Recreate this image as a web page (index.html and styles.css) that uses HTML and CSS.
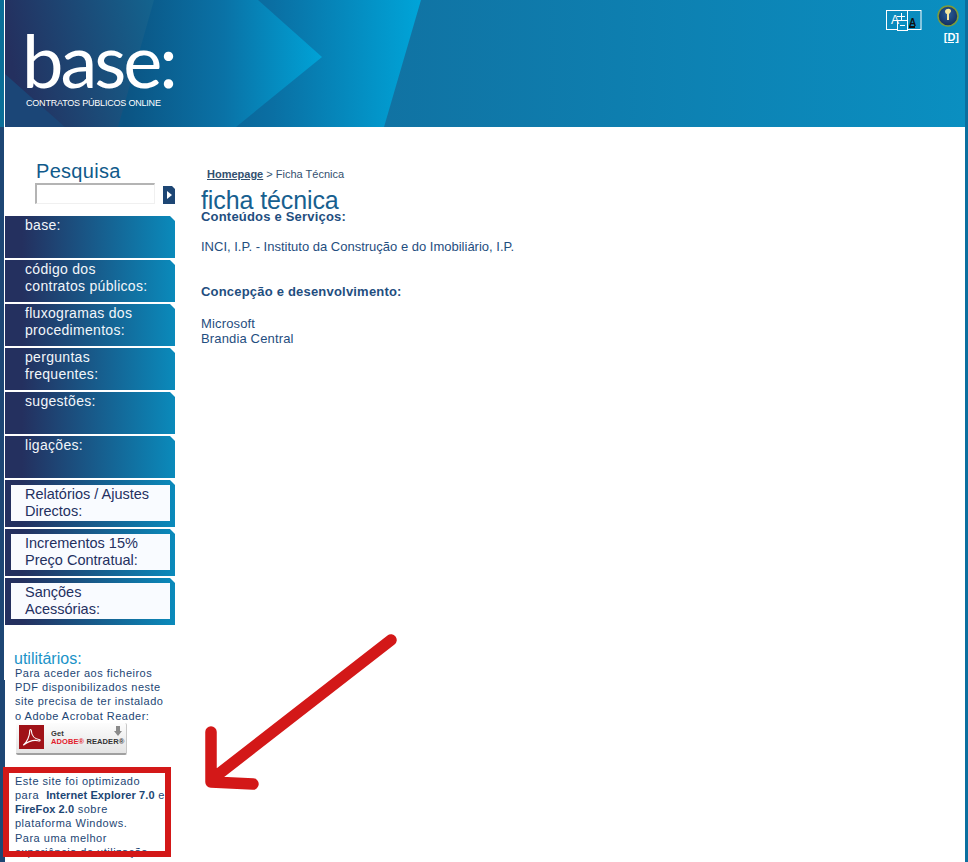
FILE: index.html
```html
<!DOCTYPE html>
<html lang="pt">
<head>
    <meta charset="UTF-8">
    <title>base: Contratos Públicos Online - Ficha Técnica</title>
    <link rel="stylesheet" href="styles.css">
</head>
<body>
    <div class="page">
        <!-- Header -->
        <header class="header">
            <svg class="header-art" width="960" height="127" viewBox="0 0 960 127">
                <defs>
                    <linearGradient id="gradRight" x1="0" x2="1" y1="0" y2="0">
                        <stop offset="0" stop-color="#15608f"/>
                        <stop offset="1" stop-color="#0a8fc1"/>
                    </linearGradient>
                    <linearGradient id="gradMid" gradientUnits="userSpaceOnUse" x1="120" x2="415" y1="0" y2="0">
                        <stop offset="0" stop-color="#0b4f80"/>
                        <stop offset="0.5" stop-color="#0a6fa3"/>
                        <stop offset="1" stop-color="#00a4d8"/>
                    </linearGradient>
                    <linearGradient id="gradArrow" gradientUnits="userSpaceOnUse" x1="120" x2="318" y1="0" y2="0">
                        <stop offset="0" stop-color="#0b5483"/>
                        <stop offset="0.5" stop-color="#0a72a6"/>
                        <stop offset="1" stop-color="#00a3d7"/>
                    </linearGradient>
                    <linearGradient id="gradDark" gradientUnits="userSpaceOnUse" x1="0" x2="150" y1="30" y2="0">
                        <stop offset="0" stop-color="#24305f"/>
                        <stop offset="1" stop-color="#13648f"/>
                    </linearGradient>
                    <radialGradient id="gradGlobe" cx="0.5" cy="0.4" r="0.6">
                        <stop offset="0" stop-color="#2a5f9c"/>
                        <stop offset="1" stop-color="#122c5c"/>
                    </radialGradient>
                </defs>
                <rect width="960" height="127" fill="url(#gradRight)"/>
                <polygon points="100,0 416,0 379,127 100,127" fill="url(#gradMid)"/>
                <polygon points="100,0 253,0 317,57 231,127 100,127" fill="url(#gradArrow)"/>
                <polygon points="0,0 149,0 113,127 0,127" fill="url(#gradDark)"/>
                <polygon points="0,74 60,127 0,127" fill="#1b4677"/>
            </svg>
            <div class="logo">
                <div class="logo-word">base:</div>
                <div class="logo-sub">CONTRATOS PÚBLICOS ONLINE</div>
            </div>
            <div class="header-tools">
                <div class="font-tool">
                    <svg width="36" height="21" viewBox="0 0 36 21">
                        <rect x="0.5" y="0.500" width="21" height="19" fill="none" stroke="#fff"/>
                        <rect x="21.5" y="0.500" width="13.500" height="19" fill="none" stroke="#fff"/>
                        <rect x="11.5" y="10.500" width="10" height="10" fill="#0a8fc1" stroke="#fff"/>
                        <path d="M14 15.500h5M11 6.500h8M15.500 3v7" stroke="#fff" fill="none"/>
                        <text x="5" y="14" class="font-tool-a">A</text>
                        <text x="23" y="16" class="font-tool-b">A</text>
                        <rect x="23" y="16" width="6" height="2" fill="#111"/>
                    </svg>
                </div>
                <div class="lang-tool">
                    <svg width="22" height="22" viewBox="0 0 22 22">
                        <circle cx="11" cy="11" r="10" fill="url(#gradGlobe)" stroke="#7f9a38" stroke-width="1.500"/>
                        <path d="M8 6c1-3 6-3 6 0 0 1-1 2-2 3l0 6-2 0 0-6c-1 0-2-1-2-3z" fill="#f4e7a0"/>
                    </svg>
                    <a href="#" class="lang-link">[D]</a>
                </div>
            </div>
        </header>

        <div class="content-row">
            <!-- Left column -->
            <aside class="sidebar">
                <div class="search">
                    <h2 class="search-title">Pesquisa</h2>
                    <div class="search-row">
                        <input type="text" class="search-input">
                        <button class="search-btn" type="button"></button>
                    </div>
                </div>

                <nav class="menu">
                    <a href="#" class="menu-item">base:</a>
                    <a href="#" class="menu-item">código dos<br>contratos públicos:</a>
                    <a href="#" class="menu-item">fluxogramas dos<br>procedimentos:</a>
                    <a href="#" class="menu-item">perguntas<br>frequentes:</a>
                    <a href="#" class="menu-item">sugestões:</a>
                    <a href="#" class="menu-item">ligações:</a>
                </nav>

                <div class="boxes">
                    <a href="#" class="box-item"><span>Relatórios / Ajustes<br>Directos:</span></a>
                    <a href="#" class="box-item"><span>Incrementos 15%<br>Preço Contratual:</span></a>
                    <a href="#" class="box-item"><span>Sanções<br>Acessórias:</span></a>
                </div>

                <div class="tools">
                    <h3 class="tools-title">utilitários:</h3>
                    <p>Para aceder aos ficheiros<br>PDF disponibilizados neste<br>site precisa de ter instalado<br>o Adobe Acrobat Reader:</p>
                    <a href="#" class="reader-badge">
                        <span class="reader-icon">
                            <svg width="23" height="22" viewBox="0 0 24 24">
                                <path d="M3 21c4-3 7-10 7-15 0-3 2-3 2 0 0 4 3 8 9 9 1 1 0 2-2 1-5-1-11 1-16 5z" fill="none" stroke="#fff" stroke-width="1.200"/>
                            </svg>
                        </span>
                        <span class="reader-text">
                            <b class="reader-get">Get</b>
                            <b class="reader-name"><i>ADOBE®</i> READER®</b>
                        </span>
                        <svg class="reader-arrow" width="8" height="11" viewBox="0 0 8 11">
                            <path d="M2 0h4v5h2l-4 5-4-5h2z" fill="#8a8a8a"/>
                        </svg>
                    </a>
                    <p class="browser-note">Este site foi optimizado<br>para &nbsp;<b>Internet Explorer 7.0</b> e<br><b>FireFox 2.0</b> sobre<br>plataforma Windows.<br>Para uma melhor<br>experiência de utilização<br>do mesmo, sugerimos a utili</p>
                </div>
            </aside>

            <!-- Main content -->
            <main class="main">
                <div class="breadcrumb"><a href="#">Homepage</a> &gt; Ficha Técnica</div>
                <h1 class="page-title">ficha técnica</h1>
                <p class="label">Conteúdos e Serviços:</p>
                <p class="inci">INCI, I.P. - Instituto da Construção e do Imobiliário, I.P.</p>
                <p class="label label-second">Concepção e desenvolvimento:</p>
                <p class="credits">Microsoft<br>Brandia Central</p>
            </main>
        </div>
    </div>

    <!-- Red annotation drawn over the screenshot -->
    <div class="note-frame"></div>
    <svg class="note-arrow" width="220" height="180" viewBox="0 0 220 180">
        <path d="M201 20L21 160M21 112V162L63 164" fill="none" stroke="#d31818" stroke-width="11.500" stroke-linecap="round" stroke-linejoin="round"/>
    </svg>
</body>
</html>
```

FILE: styles.css
```css
* {
    margin: 0;
    padding: 0;
    box-sizing: border-box;
}

html, body {
    height: 862px;
    overflow: hidden;
}

body {
    position: relative;
    font-family: "Liberation Sans", Arial, sans-serif;
    background: #fff;
    color: #1d4674;
}

a {
    color: inherit;
    text-decoration: none;
}

.page {
    height: 862px;
    border-right: 3px solid #0a6f9f;
    background:
        linear-gradient(#0a6f98 127px, #1d4674 127px) 0 0 / 4px 680px no-repeat,
        linear-gradient(#1d4674, #1d4674) 0 680px / 5px 182px no-repeat;
    padding-left: 5px;
}

/* Header */
.header {
    position: relative;
    height: 127px;
    background: #0a8fc1;
    display: flex;
    justify-content: space-between;
}

.header-art {
    position: absolute;
    top: 0;
    left: 0;
}

.logo {
    position: relative;
    padding: 27px 0 0 17px;
    color: #fff;
}

.logo-word {
    font-family: Lato, sans-serif;
    font-size: 74px;
    line-height: 66px;
    letter-spacing: -3px;
}

.logo-sub {
    font-size: 9px;
    line-height: 11px;
    margin-top: 5px;
    margin-left: 4px;
    letter-spacing: -0.200px;
}

.header-tools {
    position: relative;
    display: flex;
    gap: 15px;
    padding: 5px 6px 0 0;
}

.font-tool {
    padding-top: 5px;
}

.font-tool svg,
.lang-tool svg {
    display: block;
}

.font-tool-a {
    font-size: 12px;
    fill: #fff;
}

.font-tool-b {
    font-size: 10px;
    font-weight: bold;
    fill: #111;
}

.lang-tool {
    display: flex;
    flex-direction: column;
    align-items: flex-end;
    gap: 4px;
}

.lang-link {
    font-size: 11px;
    line-height: 12px;
    font-weight: bold;
    color: #fff;
    text-decoration: underline;
}

/* Columns */
.content-row {
    display: flex;
    height: 735px;
    background: #fff;
}

.sidebar {
    width: 170px;
    flex: none;
}

/* Search */
.search {
    height: 89px;
    padding: 33px 0 0 30px;
}

.search-title {
    font-size: 20px;
    line-height: 23px;
    font-weight: normal;
    letter-spacing: 0.300px;
    color: #105a8b;
    margin-left: 1px;
}

.search-row {
    display: flex;
    align-items: flex-start;
    justify-content: space-between;
}

.search-input {
    width: 120px;
    height: 21px;
    border: 1px solid #f0f0f0;
    border-top: 2px solid #b4b4b4;
    border-left: 2px solid #b4b4b4;
    background: #fff;
}

.search-btn {
    width: 12px;
    height: 18px;
    margin-top: 3px;
    border: none;
    background: #1d4674;
    clip-path: polygon(0 0, 9px 0, 12px 3px, 12px 18px, 0 18px);
    position: relative;
}

.search-btn::after {
    content: "";
    position: absolute;
    left: 4px;
    top: 5px;
    border-left: 5px solid #fff;
    border-top: 4px solid transparent;
    border-bottom: 4px solid transparent;
}

/* Menu */
.menu {
    display: flex;
    flex-direction: column;
    gap: 2px;
}

.menu-item {
    display: block;
    height: 42px;
    padding: 1px 0 0 20px;
    font-size: 14px;
    line-height: 17px;
    letter-spacing: 0.300px;
    color: #f2f6fa;
    background: linear-gradient(90deg, #24305f 10%, #0a8abb 100%);
    clip-path: polygon(0 0, 165px 0, 170px 5px, 170px 100%, 0 100%);
}

.boxes {
    display: flex;
    flex-direction: column;
    gap: 2px;
    margin-top: 2px;
}

.box-item {
    display: block;
    height: 47px;
    padding: 5px 5px 6px 6px;
    background: linear-gradient(90deg, #24305f 10%, #0a8abb 100%);
    clip-path: polygon(0 0, 165px 0, 170px 5px, 170px 100%, 0 100%);
}

.box-item span {
    display: block;
    height: 36px;
    padding: 1px 0 0 14px;
    font-size: 14.500px;
    line-height: 17px;
    color: #24305f;
    background: #f9fbff;
}

/* Utilities */
.tools {
    padding: 27px 0 0 10px;
    font-size: 11px;
    line-height: 14.200px;
    letter-spacing: 0.500px;
}

.tools-title {
    font-size: 16px;
    line-height: 14px;
    font-weight: normal;
    margin-left: -1px;
    color: #1a93c8;
    letter-spacing: 0;
}

.tools b {
    letter-spacing: 0.100px;
}

.reader-badge {
    display: flex;
    position: relative;
    width: 111px;
    height: 32px;
    margin: 0 0 0 1px;
    padding: 2px 0 0 3px;
    gap: 7px;
    background: linear-gradient(#fdfdfd, #e4e4e4);
    border-bottom: 2px solid #a0a0a0;
    border-right: 1px solid #c8c8c8;
    border-radius: 2px;
    color: #333;
}

.reader-icon {
    width: 25px;
    height: 24px;
    padding: 1px;
    background: #a01218;
}

.reader-icon svg {
    display: block;
}

.reader-text {
    display: flex;
    flex-direction: column;
    padding-top: 5px;
    font-size: 7.500px;
    line-height: 8px;
    letter-spacing: 0;
    white-space: nowrap;
}

.reader-name i {
    font-style: normal;
    color: #e2202a;
}

.reader-arrow {
    position: absolute;
    top: 3px;
    right: 4px;
}

.browser-note {
    margin-top: 19px;
}

/* Main content */
.main {
    flex: 1;
    padding: 41px 0 0 26px;
    font-size: 13px;
    line-height: 15px;
    color: #1f4e80;
}

.breadcrumb {
    font-size: 11px;
    line-height: 13px;
    padding-left: 6px;
    color: #33506f;
}

.breadcrumb a {
    font-weight: bold;
    text-decoration: underline;
}

.page-title {
    font-size: 25px;
    line-height: 24px;
    font-weight: normal;
    letter-spacing: -0.100px;
    color: #17608f;
    margin-top: 7px;
}

.label {
    font-weight: bold;
    margin-top: -3px;
    letter-spacing: 0.200px;
}

.label-second {
    margin-top: 30px;
}

.inci {
    margin-top: 15px;
}

.credits {
    margin-top: 17px;
    letter-spacing: 0.150px;
}

/* Annotation */
.note-frame {
    position: absolute;
    left: 3px;
    top: 767px;
    width: 168px;
    height: 90px;
    border: 6px solid #d31818;
}

.note-arrow {
    position: absolute;
    left: 190px;
    top: 620px;
}
```
